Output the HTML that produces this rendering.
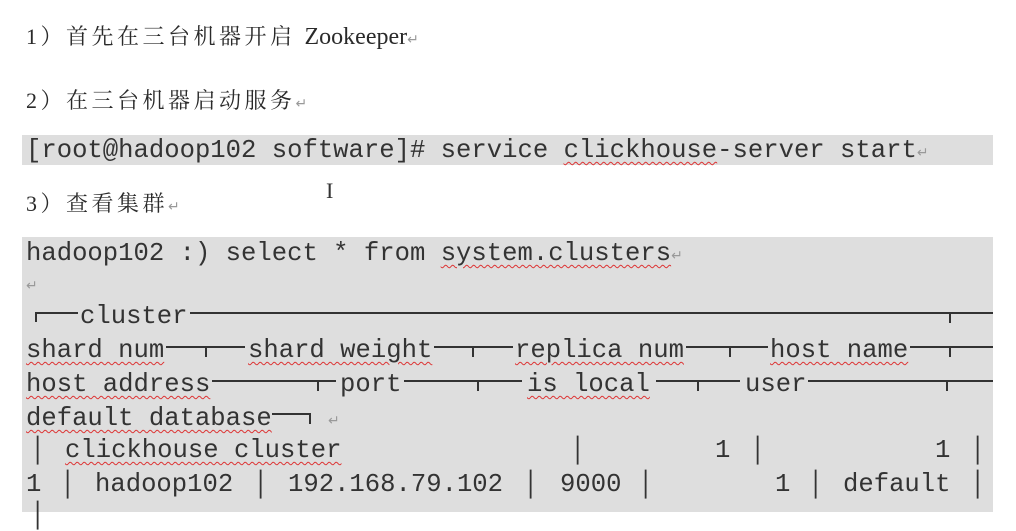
<!DOCTYPE html>
<html><head><meta charset="utf-8"><style>
body{margin:0;width:1016px;height:512px;background:#fff;position:relative;overflow:hidden;color:#2a2a2a}
.h{position:absolute;left:26px;font-family:"Liberation Serif","Noto Serif CJK SC",serif;font-size:22px;letter-spacing:3.5px;white-space:pre;line-height:26px}
.m{position:absolute;font-family:"Liberation Mono",monospace;font-size:25.6px;white-space:pre;line-height:30px;color:#333}
.w{text-decoration:underline wavy #d33;text-decoration-thickness:1px;text-underline-offset:4px}
.r{color:#999;font-size:14px;font-family:"DejaVu Sans",sans-serif;letter-spacing:0}
.g{position:absolute;background:#dedede}
svg{position:absolute;left:0;top:0}
</style></head><body>
<div class="g" style="left:22px;top:135px;width:971px;height:30px"></div>
<div class="g" style="left:22px;top:237px;width:971px;height:275px"></div>
<div class="h" style="top:24px">1）首先在三台机器开启 <span style="letter-spacing:0;font-size:24px">Zookeeper</span><span class="r">↵</span></div>
<div class="h" style="top:88px">2）在三台机器启动服务<span class="r">↵</span></div>
<div class="h" style="top:191px">3）查看集群<span class="r">↵</span></div>
<div style="position:absolute;left:326px;top:178px;font-family:'Liberation Serif',serif;font-size:22px;color:#333">I</div>
<div class="m" style="left:26px;top:136px">[root@hadoop102 software]# service <span class="w">clickhouse</span>-server start<span class="r">↵</span></div>
<div class="m" style="left:26px;top:239px">hadoop102 :) select * from <span class="w">system.clusters</span><span class="r">↵</span></div>
<div class="m" style="left:26px;top:269px"><span class="r">↵</span></div>
<svg width="1016" height="512" stroke="#333" stroke-width="2" fill="none">
<path d="M36 322V313H78M190 313H993M950 313V323"/>
<path d="M166 347H245M206 347V357M434 347H513M473 347V357M686 347H768M730 347V357M910 347H993M950 347V357"/>
<path d="M212 381H336M318 381V391M404 381H522M478 381V391M656 381H740M698 381V391M808 381H993M947 381V391"/>
<path d="M272 414H310V424"/>
</svg>
<div class="m" style="left:80px;top:302px">cluster</div>
<div class="m" style="left:26px;top:336px"><span class="w">shard num</span></div>
<div class="m" style="left:248px;top:336px"><span class="w">shard weight</span></div>
<div class="m" style="left:515px;top:336px"><span class="w">replica num</span></div>
<div class="m" style="left:770px;top:336px"><span class="w">host name</span></div>
<div class="m" style="left:26px;top:370px"><span class="w">host address</span></div>
<div class="m" style="left:340px;top:370px">port</div>
<div class="m" style="left:527px;top:370px"><span class="w">is local</span></div>
<div class="m" style="left:745px;top:370px">user</div>
<div class="m" style="left:26px;top:404px"><span class="w">default database</span></div>
<div class="m" style="left:328px;top:404px"><span class="r">↵</span></div>
<div class="m" style="left:30px;top:436px">│</div>
<div class="m" style="left:65px;top:436px"><span class="w">clickhouse cluster</span></div>
<div class="m" style="left:570px;top:436px">│</div>
<div class="m" style="left:715px;top:436px">1</div>
<div class="m" style="left:750px;top:436px">│</div>
<div class="m" style="left:935px;top:436px">1</div>
<div class="m" style="left:970px;top:436px">│</div>
<div class="m" style="left:26px;top:470px">1</div>
<div class="m" style="left:60px;top:470px">│</div>
<div class="m" style="left:95px;top:470px">hadoop102</div>
<div class="m" style="left:253px;top:470px">│</div>
<div class="m" style="left:288px;top:470px">192.168.79.102</div>
<div class="m" style="left:523px;top:470px">│</div>
<div class="m" style="left:560px;top:470px">9000</div>
<div class="m" style="left:638px;top:470px">│</div>
<div class="m" style="left:775px;top:470px">1</div>
<div class="m" style="left:808px;top:470px">│</div>
<div class="m" style="left:843px;top:470px">default</div>
<div class="m" style="left:970px;top:470px">│</div>
<div class="m" style="left:30px;top:501px">│</div>
</body></html>
